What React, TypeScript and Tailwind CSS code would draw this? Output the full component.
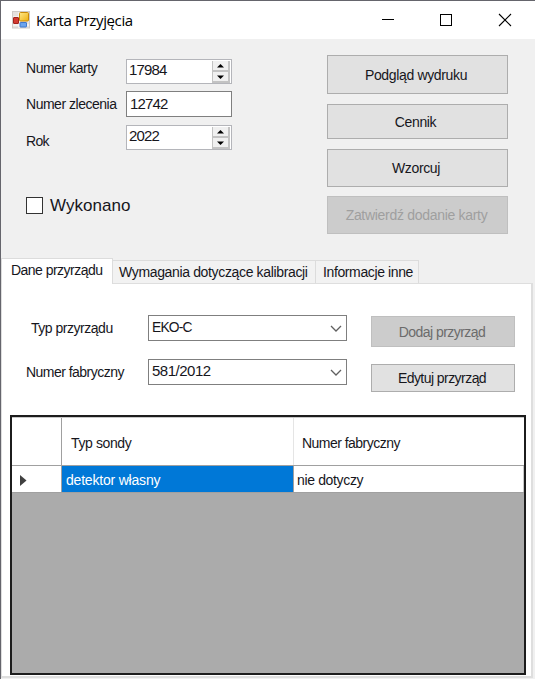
import React from "react";

const FormIcon = () => (
  <svg width="18" height="18" viewBox="0 0 18 18" className="shrink-0">
    <defs>
      <linearGradient id="gold" x1="0" y1="0" x2="1" y2="1">
        <stop offset="0" stopColor="#ffe98a" />
        <stop offset="1" stopColor="#eeb010" />
      </linearGradient>
    </defs>
    <rect x="0.5" y="0.5" width="17" height="16.5" fill="#e6e2df" stroke="#cfcbc8" />
    <path d="M1 6h6M7 1v16M1 14h16" stroke="#fff" />
    <rect x="7.5" y="1.5" width="9" height="8.5" rx="1" fill="url(#gold)" stroke="#c98a08" />
    <rect x="1.5" y="6.5" width="5" height="6" rx="0.5" fill="#d23a32" stroke="#a3221c" />
    <rect x="8" y="11.5" width="6.5" height="4.5" rx="0.5" fill="#6ba4ee" stroke="#3f78cf" />
  </svg>
);

const TitleBar = () => (
  <header className="flex h-[38px] shrink-0 items-center bg-white pl-[11px]">
    <FormIcon />
    <h1 className="-mt-px ml-[6px] flex-1 font-['Open_Sans',sans-serif] text-[15px] leading-5 tracking-[-0.38px] text-black">
      Karta Przyjęcia
    </h1>
    <svg width="154" height="38" viewBox="0 0 154 38" fill="none" stroke="#000" shapeRendering="crispEdges">
      <path d="M1 18.5h12" />
      <rect x="59.5" y="13.5" width="11" height="11" />
      <path d="M118 13l12 12M130 13l-12 12" shapeRendering="auto" strokeWidth="1.1" />
    </svg>
  </header>
);

const Spinner = ({ value }: { value: string }) => (
  <div className="flex h-[25px] w-[106px] border border-[#b4b5ba] bg-white p-px">
    <span className="h-5 flex-1 pl-px text-[15px] leading-[18px] tracking-[-0.85px]">{value}</span>
    <span className="flex w-[18px] flex-col">
      {["M5 6.5h7L8.500 3z", "M5 3.500h7L8.500 7z"].map((d) => (
        <span key={d} className="h-[11px] border-r-2 border-b-2 border-l border-[#c3c3c3] bg-[#f0f0f0]">
          <svg width="15" height="9" viewBox="1 0 15 9">
            <path d={d} fill="#000" />
          </svg>
        </span>
      ))}
    </span>
  </div>
);

const Button = ({ className, children }: { className: string; children: React.ReactNode }) => (
  <button className={`flex items-center justify-center border whitespace-nowrap ${className}`}>{children}</button>
);

const Combo = ({ value, textClass }: { value: string; textClass: string }) => (
  <div className="flex h-[26px] w-[199px] items-start justify-between border border-[#7f7f7f] bg-white pl-[3px] pr-[4px]">
    <span className={`text-[15px] leading-[22px] ${textClass}`}>{value}</span>
    <svg width="12" height="24" viewBox="0 0 12 24" fill="none">
      <path d="M1 10l5 5 5-5" stroke="#606060" strokeWidth="1.3" />
    </svg>
  </div>
);

export default function App() {
  return (
    <main className="flex h-[679px] w-[535px] flex-col overflow-hidden border-t border-l border-[#65656c] bg-[#f0f0f0] font-['Liberation_Sans',Arial,sans-serif] text-[14px] leading-4 text-[#16161c]">
      <TitleBar />

      <section className="flex h-[219px] shrink-0 justify-between pr-[27px] pl-[25px]">
        <div>
          <div className="flex pt-5">
            <span className="w-[100px] pt-[1px] tracking-[-0.45px]">Numer karty</span>
            <Spinner value="17984" />
          </div>
          <div className="flex pt-[7px]">
            <span className="w-[100px] pt-[5px] tracking-[-0.48px] whitespace-nowrap">Numer zlecenia</span>
            <div className="h-[26px] w-[106px] border border-[#7f7f7f] bg-white pl-[3px] text-[15px] leading-[24px] tracking-[-0.85px]">
              12742
            </div>
          </div>
          <div className="flex pt-2">
            <span className="w-[100px] pt-[8px] tracking-[-0.65px]">Rok</span>
            <Spinner value="2022" />
          </div>
          <label className="flex items-center pt-[46px]">
            <span className="size-[17px] border border-[#333] bg-white" />
            <span className="-mb-[2px] ml-[7px] text-[17px] leading-5 tracking-[0.05px]">Wykonano</span>
          </label>
        </div>
        <div className="flex w-[181px] flex-col pt-4">
          <Button className="h-[39px] border-[#adadad] bg-[#e1e1e1] pr-[3px] tracking-[-0.35px]">Podgląd wydruku</Button>
          <Button className="mt-[10px] h-[35px] border-[#adadad] bg-[#e1e1e1] pr-[4px] tracking-[-0.35px]">Cennik</Button>
          <Button className="mt-[10px] h-[38px] border-[#adadad] bg-[#e1e1e1] pr-[3px] tracking-[-0.35px]">Wzorcuj</Button>
          <Button className="mt-[9px] h-[38px] border-[#bfbfbf] bg-[#cccccc] pr-[2px] tracking-[-0.3px] text-[#9f9f9f]">
            Zatwierdź dodanie karty
          </Button>
        </div>
      </section>

      <nav className="flex h-[25px] shrink-0 items-end">
        <div className="z-10 -mb-px h-[26px] w-[112px] border border-b-0 border-[#dcdcdc] bg-white pt-[3px] pl-[9px] tracking-[-0.53px] whitespace-nowrap">
          Dane przyrządu
        </div>
        <div className="h-[23px] w-[203px] border-t border-r border-[#dcdcdc] bg-[#f2f2f2] pt-[3px] pl-[6px] tracking-[-0.35px] whitespace-nowrap">
          Wymagania dotyczące kalibracji
        </div>
        <div className="h-[23px] w-[103px] border-t border-r border-[#dcdcdc] bg-[#f2f2f2] pt-[3px] pl-[7px] tracking-[-0.38px] whitespace-nowrap">
          Informacje inne
        </div>
      </nav>

      <section className="h-[395px] w-[532px] shrink-0 border-t border-r-2 border-b-2 border-l border-[#dedede] bg-white pl-[8px]">
        <div className="flex h-[131px]">
          <div className="w-[138px]">
            <div className="pt-[36px] pl-[21px] tracking-[-0.48px]">Typ przyrządu</div>
            <div className="pt-[28px] pl-[16px] tracking-[-0.53px]">Numer fabryczny</div>
          </div>
          <div className="flex w-[223px] flex-col gap-[18px] pt-[31px]">
            <Combo value="EKO-C" textClass="inline-block origin-left scale-x-[0.92] tracking-[-0.9px]" />
            <Combo value="581/2012" textClass="tracking-[-0.5px]" />
          </div>
          <div className="w-[144px] pt-[32px]">
            <Button className="h-[31px] w-full border-[#bfbfbf] bg-[#cccccc] pr-[2px] tracking-[-0.55px] text-[#6b6b6b]">Dodaj przyrząd</Button>
            <Button className="mt-[17px] h-[28px] w-full border-[#adadad] bg-[#e1e1e1] pr-[2px] tracking-[-0.55px]">Edytuj przyrząd</Button>
          </div>
        </div>

        <div className="h-[260px] w-[516px] border-2 border-[#1c1c1c] bg-[#ababab]">
          <div className="grid h-[49px] grid-cols-[50px_232px_230px] border-t border-b border-t-[#c8c8c8] border-b-[#a0a0a0] bg-white">
            <div className="border-r border-[#a0a0a0]" />
            <div className="border-r border-[#e5e5e5] pt-[17px] pl-[9px] tracking-[-0.38px]">Typ sondy</div>
            <div className="pt-[17px] pl-[8px] tracking-[-0.53px]">Numer fabryczny</div>
          </div>
          <div className="grid h-[27px] grid-cols-[50px_232px_230px] border-b border-[#a0a0a0] bg-white">
            <div className="border-r border-[#a0a0a0] pt-[9px] pl-[8px]">
              <svg width="7" height="11" viewBox="0 0 7 11">
                <path d="M0 0v11l6.500-5.500z" fill="#404040" />
              </svg>
            </div>
            <div className="border-r border-[#a0a0a0] bg-[#0078d7] pt-[6px] pl-[4px] tracking-[-0.2px] text-white">detektor własny</div>
            <div className="border-r border-[#c8c8c8] pt-[6px] pl-[3px] tracking-[-0.35px]">nie dotyczy</div>
          </div>
        </div>
      </section>
    </main>
  );
}
